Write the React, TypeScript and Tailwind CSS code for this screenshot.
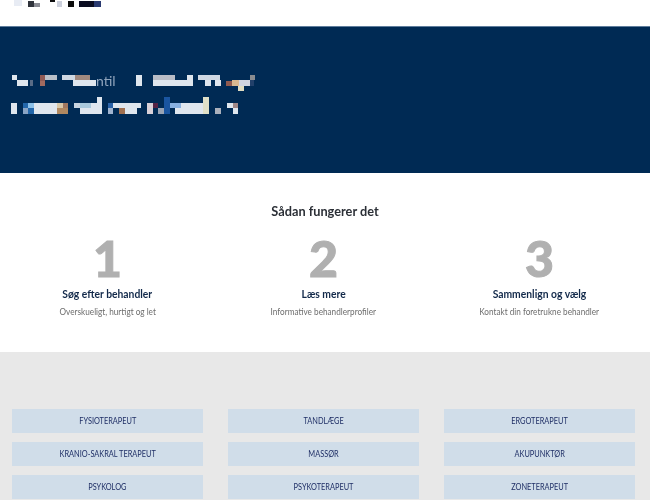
import React from 'react';

const lato = { fontFamily: 'Lato, sans-serif' };

// Pixelerede felter fra skærmbilledet: [x, y, bredde, højde, farve]
type Block = [number, number, number, number, string];

const logoBlocks: Block[] = [
  [14, 0, 8, 6, '#e8ecf4'],
  [28, 1, 6, 6, '#30343c'],
  [34, 3, 6, 4, '#8a8c94'],
  [50, 0, 5, 2, '#101010'],
  [57, 1, 5, 6, '#ccd0dc'],
  [68, 1, 6, 6, '#0c0c0c'],
  [79, 1, 15, 6, '#0a0c20'],
  [94, 1, 7, 6, '#2a3a70'],
];

const heroBlocks: Block[] = [
  [12, 75, 5, 5, '#dfe6ee'],
  [17, 80, 11, 6, '#dfe6ee'],
  [30, 80, 3, 6, '#5a6c86'],
  [40, 75, 5, 6, '#8f5a55'],
  [40, 81, 5, 5, '#a06a60'],
  [45, 75, 12, 5, '#b9bfc8'],
  [62, 75, 20, 5, '#cfd8e3'],
  [75, 75, 15, 5, '#a0897f'],
  [73, 80, 23, 6, '#dfe6ee'],
  [136, 75, 6, 11, '#dfe6ee'],
  [153, 75, 22, 5, '#b8bcc6'],
  [153, 80, 40, 6, '#dfe6ee'],
  [187, 75, 6, 5, '#dfe6ee'],
  [198, 75, 22, 5, '#cfd8e3'],
  [205, 80, 6, 6, '#dfe6ee'],
  [215, 80, 6, 6, '#dfe6ee'],
  [226, 81, 6, 5, '#8f5a50'],
  [232, 80, 7, 6, '#d8b890'],
  [239, 80, 11, 6, '#d0d4e0'],
  [238, 86, 6, 5, '#e0dcc0'],
  [250, 75, 5, 5, '#8a8c90'],
  [250, 80, 4, 6, '#22406a'],
  [11, 103, 6, 11, '#dfe6ee'],
  [23, 103, 5, 5, '#2266aa'],
  [28, 103, 6, 5, '#8cc0e8'],
  [23, 108, 5, 6, '#8aa4c4'],
  [28, 108, 6, 6, '#2266aa'],
  [34, 103, 23, 11, '#dfe6ee'],
  [57, 103, 6, 5, '#d8c8a8'],
  [63, 103, 5, 5, '#a07860'],
  [57, 108, 11, 6, '#b08860'],
  [74, 103, 6, 5, '#c8d4e0'],
  [80, 103, 11, 5, '#a8c8dc'],
  [80, 108, 22, 6, '#dfe6ee'],
  [91, 103, 6, 5, '#dfe6ee'],
  [97, 97, 5, 11, '#dfe6ee'],
  [108, 103, 5, 5, '#2a62a8'],
  [108, 108, 5, 6, '#a0b4d0'],
  [113, 103, 28, 5, '#dfe6ee'],
  [119, 108, 6, 6, '#a07050'],
  [125, 108, 12, 6, '#dfe6ee'],
  [147, 103, 6, 11, '#d8d0d8'],
  [153, 103, 5, 5, '#552244'],
  [158, 108, 6, 6, '#9aa4b4'],
  [164, 97, 6, 17, '#1a55a0'],
  [170, 103, 11, 5, '#88b0e0'],
  [175, 108, 28, 6, '#dfe6ee'],
  [181, 103, 22, 5, '#dfe6ee'],
  [203, 97, 6, 17, '#e0e0c8'],
  [215, 108, 6, 6, '#aab0bc'],
  [227, 103, 6, 5, '#dfe6ee'],
  [233, 103, 5, 5, '#a08888'],
  [233, 108, 5, 6, '#dfe6ee'],
];

const steps = [
  { number: '1', title: 'Søg efter behandler', text: 'Overskueligt, hurtigt og let' },
  { number: '2', title: 'Læs mere', text: 'Informative behandlerprofiler' },
  { number: '3', title: 'Sammenlign og vælg', text: 'Kontakt din foretrukne behandler' },
];

const categories = [
  'FYSIOTERAPEUT',
  'TANDLÆGE',
  'ERGOTERAPEUT',
  'KRANIO-SAKRAL TERAPEUT',
  'MASSØR',
  'AKUPUNKTØR',
  'PSYKOLOG',
  'PSYKOTERAPEUT',
  'ZONETERAPEUT',
];

const Mosaic: React.FC<{ blocks: Block[]; y: number; height: number; children?: React.ReactNode }> = ({
  blocks,
  y,
  height,
  children,
}) => (
  <svg width="650" height={height} viewBox={`0 ${y} 650 ${height}`} className="block blur-[0.6px]">
    {blocks.map(([bx, by, w, h, fill], i) => (
      <rect key={i} x={bx} y={by} width={w} height={h} fill={fill} />
    ))}
    {children}
  </svg>
);

export default function App() {
  return (
    <div className="h-[500px] w-[650px] overflow-hidden bg-white" style={lato}>
      {/* Header */}
      <div className="h-[26px] bg-white">
        <Mosaic blocks={logoBlocks} y={0} height={26} />
      </div>

      {/* Hero */}
      <div className="h-[147px] border-t border-[#5f7d9c] bg-[#002a54]">
        <Mosaic blocks={heroBlocks} y={27} height={146}>
          <text x="96" y="86" fontSize="14" fill="#8fa4bc" fontFamily="Lato, sans-serif">
            ntil
          </text>
        </Mosaic>
      </div>

      {/* Sådan fungerer det */}
      <div className="h-[179px] bg-white pt-[29px]">
        <h2 className="text-center text-[14px] leading-[18px] font-bold text-[#2b2f36]">
          <span className="inline-block scale-x-[0.91]">Sådan fungerer det</span>
        </h2>
        <div className="mt-[8px] grid grid-cols-3 gap-x-[25px] pr-[15px] pl-[12px]">
          {steps.map((step) => (
            <div key={step.number} className="text-center">
              <div className="text-[50px] leading-[60px] font-black text-[#b0b0b0] [-webkit-text-stroke:1px_#b0b0b0]">
                {step.number}
              </div>
              <div className="-mt-[2px] text-[12px] leading-[16px] font-bold text-[#12294a]">
                <span className="inline-block scale-x-[0.86]">{step.title}</span>
              </div>
              <div className="mt-[1px] text-[10px] leading-[16px] text-[#6d6d6d]">
                <span className="inline-block scale-x-[0.82]">{step.text}</span>
              </div>
            </div>
          ))}
        </div>
      </div>

      {/* Behandlertyper */}
      <div className="grid grid-cols-3 gap-x-[25px] gap-y-[9px] bg-[#e8e8e8] pt-[57px] pr-[15px] pb-[40px] pl-[12px]">
        {categories.map((category) => (
          <a
            key={category}
            className="flex h-[24px] items-center justify-center bg-[#d0dde9] text-[9px] text-[#1f2f66]"
          >
            <span className="inline-block scale-x-[0.82]">{category}</span>
          </a>
        ))}
      </div>
    </div>
  );
}
